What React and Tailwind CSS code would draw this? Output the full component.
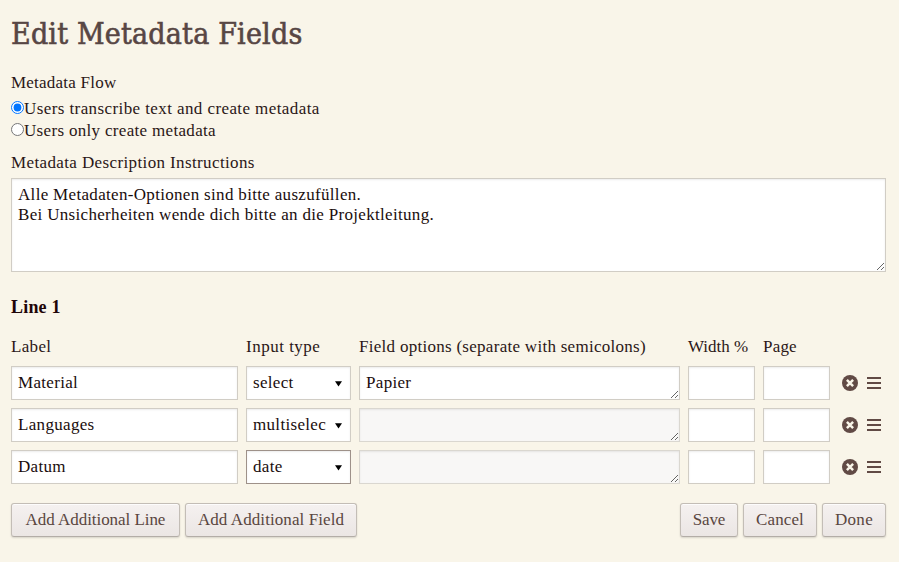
import React from "react";

const field =
  "block h-[34px] w-full rounded-none border border-[#d1cdc5] bg-white px-1.5 text-[#1a0d0d] shadow-[inset_0_1px_2px_rgba(0,0,0,0.08)] outline-none";

const grid = "grid grid-cols-[227px_105px_321px_67px_67px_48px] gap-x-2";

const rows = [
  { label: "Material", type: "select", options: "Papier" },
  { label: "Languages", type: "multiselect", disabled: true },
  { label: "Datum", type: "date", disabled: true, active: true },
];

function Radio({ checked, className, children }) {
  return (
    <label className="flex h-[22px] items-center">
      <input type="radio" name="flow" defaultChecked={checked} className="m-0 mb-[3px] size-[13px] shrink-0" />
      <span className={className}>{children}</span>
    </label>
  );
}

function Button({ className, children }) {
  return (
    <button
      className={
        "h-[34px] rounded-[3px] border border-[#c3bdb6] border-b-[#b3ada7] bg-linear-to-b from-[#f5f1f0] to-[#ebe6e4] text-center whitespace-nowrap text-[#5a463f] shadow-[0_1px_2px_rgba(0,0,0,0.14),inset_0_1px_0_rgba(255,255,255,0.8)] " +
        className
      }
    >
      {children}
    </button>
  );
}

function Row({ label, type, options, disabled, active }) {
  return (
    <div className={grid}>
      <input className={field} defaultValue={label} />
      <div
        className={
          "flex h-[34px] items-center justify-between border bg-white pr-2 pl-1.5 text-[#1a0d0d] shadow-[inset_0_1px_2px_rgba(0,0,0,0.08)] " +
          (active ? "border-[#9e9189]" : "border-[#d1cdc5]")
        }
      >
        <span className="w-[73px] overflow-hidden whitespace-nowrap">{type}</span>
        <svg width="7" height="6" viewBox="0 0 7 6" className="mt-0.5" fill="#000">
          <path d="M0 0.3h7L3.5 5.6z" />
        </svg>
      </div>
      <textarea
        className={field + " resize py-1.5 leading-5" + (disabled ? " !border-[#dad7d0] !bg-[#f8f7f6]" : "")}
        defaultValue={options}
        rows={1}
      />
      <input className={field} />
      <input className={field} />
      <div className="flex items-center gap-[9px] pl-1">
        <svg width="16" height="16" viewBox="0 0 16 16">
          <circle cx="8" cy="8" r="8" fill="#614a45" />
          <path d="M4.9 4.9l6.2 6.2M11.1 4.9l-6.2 6.2" stroke="#f9f5e9" strokeWidth="2.5" />
        </svg>
        <svg width="14" height="12" viewBox="0 0 14 12" fill="#614a45">
          <path d="M0 0h14v2H0zM0 5h14v2H0zM0 10h14v2H0z" />
        </svg>
      </div>
    </div>
  );
}

export default function App() {
  return (
    <main className="h-[562px] w-[899px] overflow-hidden bg-[#f9f5e9] px-[11px] pt-[13px] font-['Source_Serif_Pro','Liberation_Serif',serif] text-[17px] leading-5 tracking-[0.32px] text-[#2b1717]">
      <h1 className="h-10 font-['DejaVu_Serif_Condensed','DejaVu_Serif',serif] text-[30px] leading-[41px] tracking-[0.2px] whitespace-nowrap text-[#574644] [-webkit-text-stroke:0.6px_#574644]">
        Edit Metadata Fields
      </h1>
      <p className="mt-5 tracking-[0.23px]">Metadata Flow</p>
      <div className="mt-[5px]">
        <Radio checked className="tracking-[0.41px]">Users transcribe text and create metadata</Radio>
        <Radio>Users only create metadata</Radio>
      </div>
      <p className="mt-[11px] tracking-[0.38px]">Metadata Description Instructions</p>
      <textarea
        className="mt-[5px] block h-[94px] w-[875px] resize border border-[#d1cdc5] bg-white px-1.5 py-1.5 leading-5 text-[#1a0d0d] shadow-[inset_0_1px_2px_rgba(0,0,0,0.08)] outline-none"
        defaultValue={"Alle Metadaten-Optionen sind bitte auszufüllen.\nBei Unsicherheiten wende dich bitte an die Projektleitung."}
      />
      <h2 className="mt-[25px] text-[18px] leading-5 font-bold tracking-[0.2px] text-[#1f0508]">Line 1</h2>
      <div className={grid + " mt-5 whitespace-nowrap"}>
        <span>Label</span>
        <span className="tracking-[0.5px]">Input type</span>
        <span className="tracking-[0.28px]">Field options (separate with semicolons)</span>
        <span className="tracking-[0px]">Width %</span>
        <span className="tracking-[0.2px]">Page</span>
      </div>
      <div className="mt-[9px] flex flex-col gap-2">
        {rows.map((r) => (
          <Row key={r.label} {...r} />
        ))}
      </div>
      <div className="mt-[19px] flex w-[875px] gap-[5px]">
        <Button className="w-[169px] tracking-[-0.05px]">Add Additional Line</Button>
        <Button className="mr-auto w-[172px] tracking-[0.08px]">Add Additional Field</Button>
        <Button className="w-[58px] tracking-[-0.1px]">Save</Button>
        <Button className="w-[74px] tracking-[0.1px]">Cancel</Button>
        <Button className="w-16 tracking-[0.3px]">Done</Button>
      </div>
    </main>
  );
}
